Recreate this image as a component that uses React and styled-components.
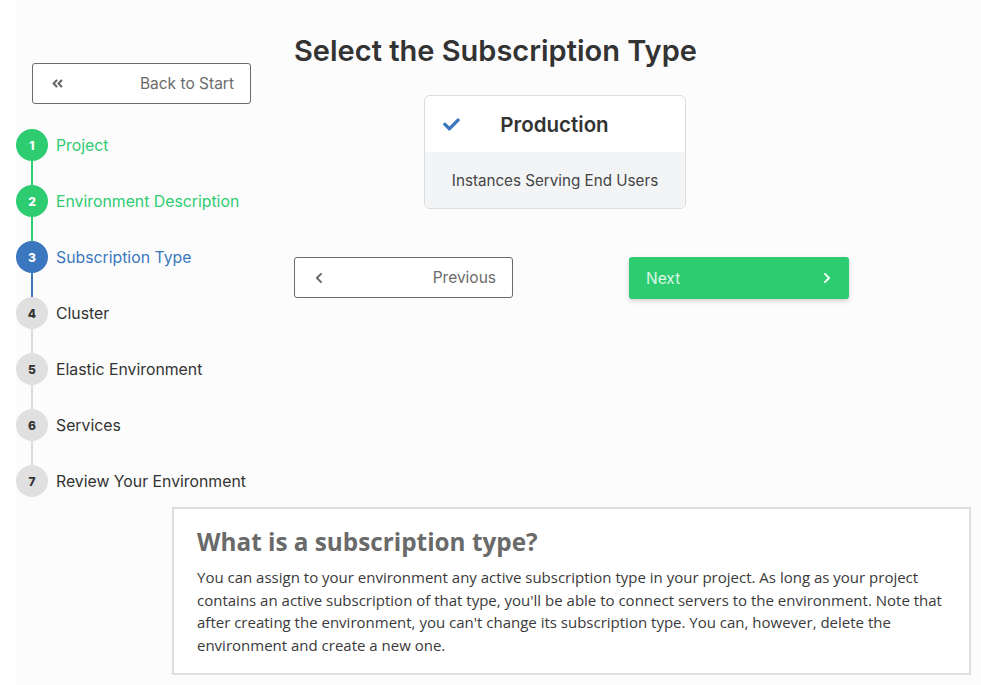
import React from "react";
import styled, { createGlobalStyle } from "styled-components";
import { FaAngleDoubleLeft, FaChevronLeft, FaChevronRight, FaCheck } from "react-icons/fa";

const Global = createGlobalStyle`
  html, body { margin: 0; padding: 0; background: #ffffff; }
  body { font-family: Inter, "Open Sans", sans-serif; color: #333; }
  * { box-sizing: border-box; }
`;

const Page = styled.div`
  margin-left: 16px;
  min-height: 685px;
  background: #fcfcfc;
  display: flex;
  flex-direction: column;
`;

const Top = styled.div`
  display: flex;
  align-items: flex-start;
`;

const Sidebar = styled.aside`
  width: 278px;
  padding-top: 63px;
  display: flex;
  flex-direction: column;
`;

const OutlineButton = styled.button`
  width: 219px;
  height: 41px;
  margin-left: ${(p) => p.$indent || 0}px;
  display: flex;
  align-items: center;
  justify-content: space-between;
  padding: 0 16px 0 18px;
  background: #ffffff;
  border: 1px solid #6b6b6b;
  border-radius: 3px;
  color: #6b6b6b;
  font-family: Inter, sans-serif;
  font-size: 15.5px;
  cursor: pointer;
  svg { color: #666; }
`;

const Steps = styled.ol`
  list-style: none;
  margin: 25px 0 0 0;
  padding: 0;
  display: flex;
  flex-direction: column;
`;

const Step = styled.li`
  display: flex;
  gap: 8px;
`;

const Marker = styled.div`
  width: 32px;
  display: flex;
  flex-direction: column;
  align-items: center;
`;

const Circle = styled.div`
  width: 32px;
  height: 32px;
  border-radius: 50%;
  display: flex;
  align-items: center;
  justify-content: center;
  font-family: Inter, sans-serif;
  font-weight: 800;
  font-size: 12px;
  background: ${(p) => p.$bg};
  color: ${(p) => p.$fg};
`;

const Connector = styled.div`
  width: 1.5px;
  height: 24px;
  background: ${(p) => p.$color};
`;

const StepLabel = styled.span`
  height: 32px;
  padding-top: 1px;
  line-height: 32px;
  font-family: Inter, sans-serif;
  font-size: 15.8px;
  color: ${(p) => p.$color};
`;

const Main = styled.main`
  padding-top: 32px;
  display: flex;
  flex-direction: column;
`;

const Title = styled.h1`
  margin: 0;
  font-family: Inter, sans-serif;
  font-weight: 600;
  font-size: 29px;
  line-height: 37px;
  color: #333;
`;

const Card = styled.div`
  margin: 26px 0 0 130px;
  width: 262px;
  border: 1px solid #dcdcdc;
  border-radius: 6px;
  overflow: hidden;
  background: #fff;
`;

const CardHead = styled.div`
  height: 56px;
  display: flex;
  align-items: center;
  padding-left: 18px;
  svg { color: #3a77bf; }
`;

const CardTitle = styled.span`
  flex: 1;
  text-align: center;
  padding-right: 36px;
  font-family: Inter, sans-serif;
  font-weight: 600;
  font-size: 20.5px;
  color: #333;
`;

const CardBody = styled.div`
  height: 56px;
  background: #f3f4f6;
  display: flex;
  align-items: center;
  justify-content: center;
  font-family: Inter, sans-serif;
  font-size: 15.2px;
  color: #444;
`;

const NavRow = styled.div`
  margin-top: 48px;
  display: flex;
  gap: 116px;
`;

const NextButton = styled.button`
  width: 220px;
  height: 42px;
  display: flex;
  align-items: center;
  justify-content: space-between;
  padding: 0 16px 0 17px;
  background: #2ecc71;
  border: none;
  border-radius: 3px;
  box-shadow: 0 2px 5px rgba(0, 0, 0, 0.18);
  color: #dcf7e6;
  font-family: Inter, sans-serif;
  font-size: 15.5px;
  cursor: pointer;
  svg { color: #f4fff8; }
`;

const Help = styled.section`
  margin: 10px 0 0 156px;
  width: 799px;
  background: #ffffff;
  border: 2px solid #dedede;
  padding: 18px 23px 17px 23px;
  font-family: "Open Sans", sans-serif;
`;

const HelpTitle = styled.h2`
  margin: 0 0 9px 0;
  font-size: 24.3px;
  line-height: 30px;
  font-weight: 700;
  color: #6a6a6a;
`;

const HelpText = styled.p`
  margin: 0;
  font-size: 15px;
  line-height: 22.5px;
  color: #3a3a3a;
`;

const GREEN = "#2ecc71";
const BLUE = "#3a77bf";

const steps = [
  { n: 1, label: "Project", state: "done" },
  { n: 2, label: "Environment Description", state: "done" },
  { n: 3, label: "Subscription Type", state: "current" },
  { n: 4, label: "Cluster", state: "todo" },
  { n: 5, label: "Elastic Environment", state: "todo" },
  { n: 6, label: "Services", state: "todo" },
  { n: 7, label: "Review Your Environment", state: "todo" },
];

const stateStyle = {
  done: { bg: GREEN, fg: "#fff", label: GREEN, line: GREEN },
  current: { bg: BLUE, fg: "#fff", label: BLUE, line: BLUE },
  todo: { bg: "#e0e0e0", fg: "#333", label: "#333", line: "#dcdcdc" },
};

export default function App() {
  return (
    <>
      <Global />
      <Page>
        <Top>
          <Sidebar>
            <OutlineButton $indent={16}>
              <FaAngleDoubleLeft size={13} />
              <span>Back to Start</span>
            </OutlineButton>
            <Steps>
              {steps.map((s, i) => {
                const st = stateStyle[s.state];
                return (
                  <Step key={s.n}>
                    <Marker>
                      <Circle $bg={st.bg} $fg={st.fg}>{s.n}</Circle>
                      {i < steps.length - 1 && <Connector $color={st.line} />}
                    </Marker>
                    <StepLabel $color={st.label}>{s.label}</StepLabel>
                  </Step>
                );
              })}
            </Steps>
          </Sidebar>
          <Main>
            <Title>Select the Subscription Type</Title>
            <Card>
              <CardHead>
                <FaCheck size={17} />
                <CardTitle>Production</CardTitle>
              </CardHead>
              <CardBody>Instances Serving End Users</CardBody>
            </Card>
            <NavRow>
              <OutlineButton>
                <FaChevronLeft size={12} />
                <span>Previous</span>
              </OutlineButton>
              <NextButton>
                <span>Next</span>
                <FaChevronRight size={12} />
              </NextButton>
            </NavRow>
          </Main>
        </Top>
        <Help>
          <HelpTitle>What is a subscription type?</HelpTitle>
          <HelpText>
            You can assign to your environment any active subscription type in your project. As long as your project
            contains an active subscription of that type, you'll be able to connect servers to the environment. Note that
            after creating the environment, you can't change its subscription type. You can, however, delete the
            environment and create a new one.
          </HelpText>
        </Help>
      </Page>
    </>
  );
}
